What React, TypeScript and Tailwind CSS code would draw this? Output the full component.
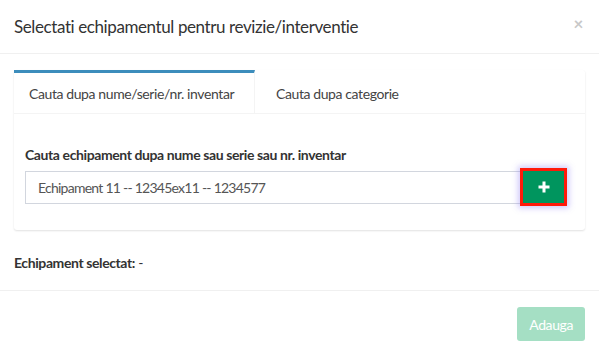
export default function App() {
  return (
    <div
      className="w-[599px] h-[355px] bg-white text-[#333] overflow-hidden tracking-[-0.4px]"
      style={{ fontFamily: "Lato, 'Open Sans', sans-serif", fontVariantLigatures: "none" }}
    >
      {/* Header */}
      <div className="h-[54px] flex items-center justify-between px-[14px] border-b border-[#f0f0f0]">
        <h4 className="text-[17px] text-[#333] leading-none">Selectati echipamentul pentru revizie/interventie</h4>
        <span className="text-[17px] font-bold text-[#c8c8c8] leading-none mr-[2px] -mt-[6px]">×</span>
      </div>

      {/* Body */}
      <div className="px-[14px] pt-[16px]">
        <div className="bg-white rounded-[3px] shadow-[0_1px_2px_rgba(0,0,0,0.12)]">
          <div className="flex border-b border-[#f4f4f4]">
            <div className="w-[241px] h-[43px] border-t-[3px] border-[#3c8dbc] border-r border-r-[#f4f4f4] flex items-center pl-[15px] text-[14px] text-[#444] -mb-px bg-white">
              Cauta dupa nume/serie/nr. inventar
            </div>
            <div className="h-[43px] flex items-center pl-[21px] pt-[3px] text-[14px] text-[#444]">Cauta dupa categorie</div>
          </div>
          <div className="pl-[11px] pr-[18px] pt-[30px] pb-[24px]">
            <label className="block text-[14px] leading-[21px] font-bold text-[#333] mb-[3px]">
              Cauta echipament dupa nume sau serie sau nr. inventar
            </label>
            <div className="flex items-center h-[38px]">
              <input
                readOnly
                value="Echipament 11 -- 12345ex11 -- 1234577"
                className="flex-1 h-[33px] border border-[#d2d6de] px-[12px] text-[14px] text-[#555] outline-none tracking-[-0.75px]"
              />
              <button className="w-[47px] h-[38px] -ml-[2px] bg-[#00955e] border-[3px] border-[#ff1a0a] shadow-[0_0_6px_2px_rgba(120,100,240,0.35)] flex items-center justify-center">
                <svg width="12" height="12" viewBox="0 0 12 12">
                  <rect x="4.5" y="0.5" width="3" height="11" fill="#fff" />
                  <rect x="0.5" y="4.5" width="11" height="3" fill="#fff" />
                </svg>
              </button>
            </div>
          </div>
        </div>

        <div className="pt-[22px] pb-[17px] text-[14px] leading-[21px]">
          <b>Echipament selectat:</b> -
        </div>
      </div>

      {/* Footer */}
      <div className="border-t border-[#f0f0f0] px-[14px] pt-[16px] flex justify-end">
        <button className="h-[34px] px-[12px] rounded-[3px] bg-[#a5dfc4] text-white text-[14px] tracking-[-0.4px]">Adauga</button>
      </div>
    </div>
  );
}
